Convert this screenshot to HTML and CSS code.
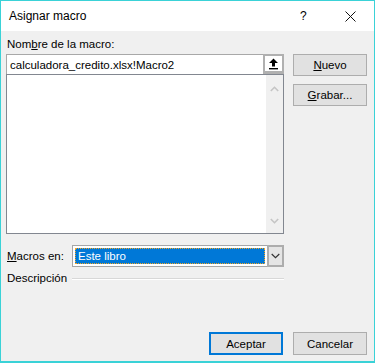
FILE: index.html
```html
<!DOCTYPE html>
<html lang="es">
<head>
  <meta charset="UTF-8" />
  <title>Asignar macro</title>
  <link rel="stylesheet" href="styles.css">
</head>
<body>
  <div class="window">
    <div class="titlebar">
      <span class="title">Asignar macro</span>
      <span class="help">?</span>
      <svg class="close" width="11" height="11" viewBox="0 0 11 11">
        <path d="M0.5 0.5 L10.5 10.5 M10.5 0.5 L0.5 10.5" stroke="#111" stroke-width="1" fill="none" />
      </svg>
    </div>

    <div class="content">
      <div class="main">
        <div class="left">
          <div class="label">Nom<u>b</u>re de la macro:</div>
          <div class="namebox">
            <span class="nametext">calculadora_credito.xlsx!Macro2</span>
            <span class="upbtn">
              <svg width="11" height="12" viewBox="0 0 11 12">
                <path d="M5.5 0.5 L10 5 L7 5 L7 8.5 L4 8.5 L4 5 L1 5 Z" fill="#000" />
                <rect x="1" y="10" width="9" height="1.4" fill="#000" />
              </svg>
            </span>
          </div>
          <div class="listbox">
            <div class="listarea"></div>
            <div class="scrollbar">
              <svg width="9" height="6" viewBox="0 0 9 6">
                <path d="M0.8 5 L4.5 1.3 L8.2 5" stroke="#c5c5c5" stroke-width="1.6" fill="none" />
              </svg>
              <svg width="9" height="6" viewBox="0 0 9 6">
                <path d="M0.8 1 L4.5 4.7 L8.2 1" stroke="#c5c5c5" stroke-width="1.6" fill="none" />
              </svg>
            </div>
          </div>

          <div class="macrosrow">
            <div class="rowlabel"><u>M</u>acros en:</div>
            <div class="select">
              <div class="selvalue"><span class="selfocus">Este libro</span></div>
              <div class="selbtn">
                <svg width="9" height="6" viewBox="0 0 9 6">
                  <path d="M0.7 1 L4.5 4.6 L8.3 1" stroke="#333" stroke-width="1.2" fill="none" />
                </svg>
              </div>
            </div>
          </div>

          <div class="descrow">
            <div class="rowlabel">Descripción</div>
            <div class="rule"></div>
          </div>
        </div>

        <div class="right">
          <div class="btn"><u>N</u>uevo</div>
          <div class="btn"><u>G</u>rabar...</div>
        </div>
      </div>

      <div class="footer">
        <div class="btn default">Aceptar</div>
        <div class="btn">Cancelar</div>
      </div>
    </div>
  </div>
</body>
</html>
```

FILE: styles.css
```css
html, body {
  margin: 0;
  padding: 0;
}

body {
  font-family: "Liberation Sans", Arial, sans-serif;
  font-size: 11.5px;
  color: #000;
}

.window {
  width: 375px;
  height: 363px;
  box-sizing: border-box;
  border: 1px solid #3ad2d7;
  border-bottom-width: 2px;
  display: flex;
  flex-direction: column;
  background: #f0f0f0;
}

.titlebar {
  height: 30px;
  background: #fff;
  display: flex;
  align-items: center;
  padding-left: 8px;
}

.title {
  font-size: 12px;
  flex: 1;
  padding-bottom: 1px;
}

.help {
  font-size: 12px;
  width: 10px;
  margin-right: 35px;
  padding-bottom: 1px;
}

.close {
  margin-right: 18px;
}

.content {
  flex: 1;
  display: flex;
  flex-direction: column;
  padding: 6px 7px 6px 5px;
}

.main {
  display: flex;
  gap: 9px;
}

.left {
  width: 278px;
  display: flex;
  flex-direction: column;
}

.label {
  line-height: 15px;
  margin-left: 1px;
  margin-bottom: 2px;
}

.namebox {
  height: 20px;
  box-sizing: border-box;
  border: 1px solid #a8a8a8;
  border-bottom: none;
  background: #fff;
  display: flex;
  align-items: center;
}

.nametext {
  flex: 1;
  padding-left: 3px;
}

.upbtn {
  width: 21px;
  height: 20px;
  box-sizing: border-box;
  margin-top: -1px;
  margin-right: -1px;
  border: 2px solid #b0b0b0;
  border-bottom-width: 3px;
  background: #fff;
  display: flex;
  align-items: center;
  justify-content: center;
}

.listbox {
  height: 160px;
  box-sizing: border-box;
  border: 1px solid #828790;
  background: #fff;
  display: flex;
}

.listarea {
  flex: 1;
}

.scrollbar {
  width: 17px;
  background: #f0f0f0;
  display: flex;
  flex-direction: column;
  align-items: center;
  justify-content: space-between;
  padding: 11px 0 9px;
}

.macrosrow {
  display: flex;
  align-items: center;
  margin-top: 11px;
}

.rowlabel {
  width: 66px;
  padding-left: 1px;
  box-sizing: border-box;
  line-height: 15px;
}

.select {
  flex: 1;
  height: 22px;
  box-sizing: border-box;
  border: 1px solid #a6a6a6;
  background: #fff;
  display: flex;
}

.selvalue {
  flex: 1;
  padding: 2px;
  display: flex;
}

.selfocus {
  flex: 1;
  background: #0078d7;
  color: #fff;
  border: 1px dotted #f5a623;
  padding-left: 2px;
  line-height: 14px;
}

.selbtn {
  width: 17px;
  box-sizing: border-box;
  margin: -1px -1px -1px 0;
  border: 2px solid #adadad;
  background: #e5e5e5;
  display: flex;
  align-items: center;
  justify-content: center;
}

.descrow {
  display: flex;
  align-items: center;
  margin-top: 4px;
}

.rule {
  flex: 1;
  height: 1px;
  background: #d8d8d8;
  border-bottom: 1px solid #fff;
  margin-top: 1px;
}

.right {
  display: flex;
  flex-direction: column;
  gap: 8px;
  padding-top: 17px;
}

.btn {
  width: 74px;
  height: 22px;
  box-sizing: border-box;
  border: 1px solid #adadad;
  background: #e1e1e1;
  display: flex;
  align-items: center;
  justify-content: center;
}

.footer {
  margin-top: auto;
  display: flex;
  justify-content: flex-end;
  gap: 10px;
}

.footer .btn {
  height: 23px;
}

.btn.default {
  border: 2px solid #0078d7;
}
```
